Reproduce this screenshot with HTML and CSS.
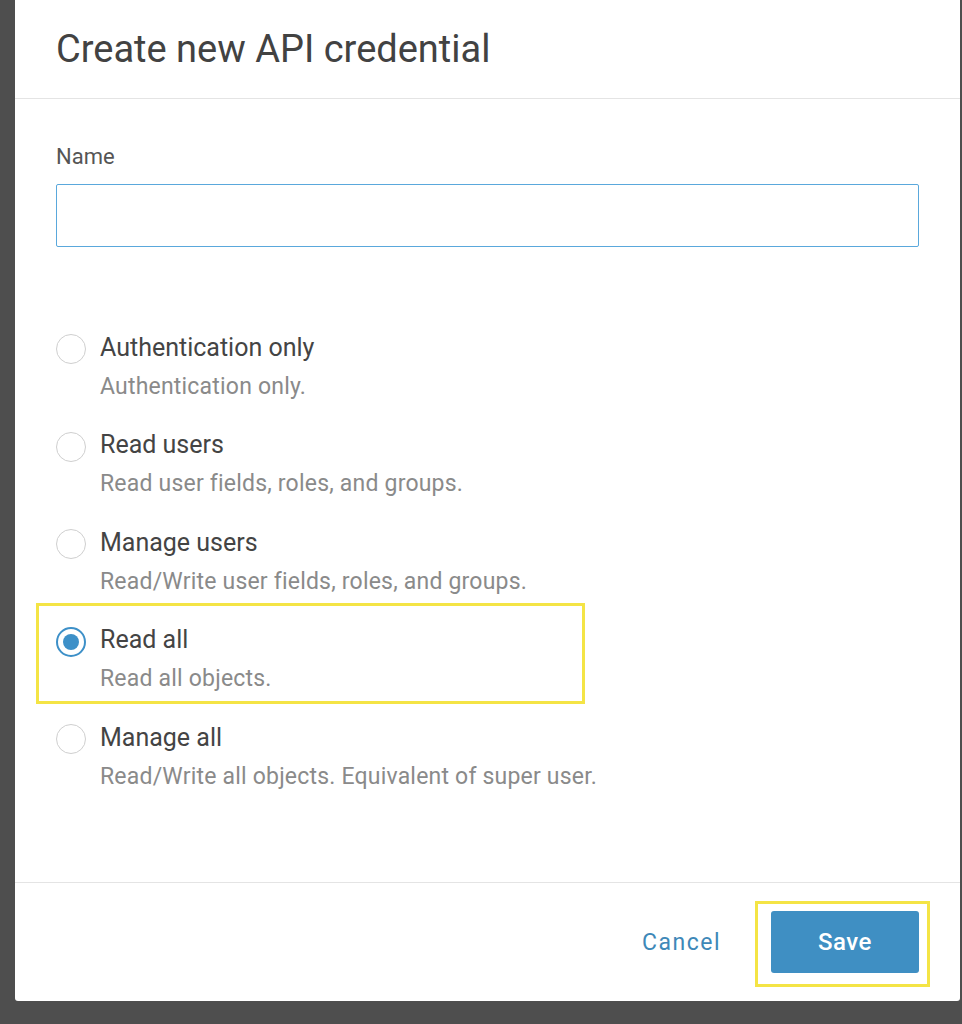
FILE: index.html
```html
<!DOCTYPE html>
<html>
<head>
<meta charset="utf-8">
<link rel="stylesheet" href="styles.css">
</head>
<body>
<div class="dialog">
  <div class="header">
    <h1 class="title">Create new API credential</h1>
  </div>
  <div class="content">
    <label class="field-label">Name</label>
    <div class="input"></div>
    <div class="options">
      <div class="option">
        <span class="radio"></span>
        <div class="option-text">
          <div class="option-title">Authentication only</div>
          <div class="option-desc">Authentication only.</div>
        </div>
      </div>
      <div class="option">
        <span class="radio"></span>
        <div class="option-text">
          <div class="option-title">Read users</div>
          <div class="option-desc">Read user fields, roles, and groups.</div>
        </div>
      </div>
      <div class="option">
        <span class="radio"></span>
        <div class="option-text">
          <div class="option-title">Manage users</div>
          <div class="option-desc">Read/Write user fields, roles, and groups.</div>
        </div>
      </div>
      <div class="option highlighted">
        <span class="radio checked"></span>
        <div class="option-text">
          <div class="option-title">Read all</div>
          <div class="option-desc">Read all objects.</div>
        </div>
        <span class="mark mark-option"></span>
      </div>
      <div class="option">
        <span class="radio"></span>
        <div class="option-text">
          <div class="option-title">Manage all</div>
          <div class="option-desc">Read/Write all objects. Equivalent of super user.</div>
        </div>
      </div>
    </div>
  </div>
  <div class="footer">
    <button class="btn-cancel">Cancel</button>
    <div class="save-wrap">
      <button class="btn-save">Save</button>
      <span class="mark mark-save"></span>
    </div>
  </div>
</div>
</body>
</html>
```

FILE: styles.css
```css
* { box-sizing: border-box; }
html, body {
  margin: 0;
  padding: 0;
  height: 1024px;
  overflow: hidden;
  background: #4e4e4e;
  font-family: Roboto, "Liberation Sans", sans-serif;
}
.dialog {
  margin-left: 15px;
  width: 945px;
  height: 1001px;
  background: #ffffff;
  border-radius: 0 0 3px 3px;
  display: flex;
  flex-direction: column;
}
.header {
  height: 99px;
  border-bottom: 1px solid #e4e4e4;
  padding: 0 41px;
  display: flex;
  align-items: flex-start;
}
.title {
  margin: 27px 0 0 0;
  font-size: 38px;
  font-weight: 400;
  color: #424242;
  line-height: 44px;
}
.content {
  flex: 1;
  padding: 0 41px;
  display: flex;
  flex-direction: column;
}
.field-label {
  margin-top: 45px;
  font-size: 22px;
  line-height: 26px;
  color: #555555;
}
.input {
  margin-top: 14px;
  height: 63px;
  border: 1.5px solid #5aa8dc;
  border-radius: 2px;
}
.options {
  margin-top: 85.5px;
  display: flex;
  flex-direction: column;
}
.option {
  position: relative;
  display: flex;
  align-items: flex-start;
  gap: 14px;
  height: 97.5px;
}
.radio {
  flex: none;
  width: 30px;
  height: 30px;
  border: 1.5px solid #cfcfcf;
  border-radius: 50%;
  margin-top: 1.5px;
  position: relative;
}
.radio.checked {
  border: 2px solid #3d90c8;
}
.radio.checked::after {
  content: "";
  position: absolute;
  left: 5px;
  top: 5px;
  width: 16px;
  height: 16px;
  border-radius: 50%;
  background: #3d90c8;
}
.option-title {
  font-size: 25px;
  line-height: 30px;
  color: #444444;
}
.option-desc {
  margin-top: 10px;
  font-size: 23px;
  line-height: 28px;
  color: #8a8a8a;
  letter-spacing: 0.2px;
}
.mark {
  position: absolute;
  border: 3px solid #f4e445;
  pointer-events: none;
}
.mark-option {
  left: -20px;
  top: -22px;
  width: 549px;
  height: 101px;
}
.footer {
  height: 119px;
  border-top: 1px solid #e4e4e4;
  display: flex;
  align-items: center;
  justify-content: flex-end;
  padding: 0 41px 0 0;
  gap: 50px;
}
.btn-cancel {
  background: none;
  border: none;
  padding: 0;
  font-family: inherit;
  font-size: 23px;
  letter-spacing: 1.5px;
  color: #3e88b8;
  cursor: pointer;
}
.save-wrap {
  position: relative;
}
.btn-save {
  display: block;
  width: 148px;
  height: 62px;
  background: #3f8fc3;
  color: #ffffff;
  border: none;
  border-radius: 3px;
  font-family: inherit;
  font-size: 24px;
  font-weight: 500;
  letter-spacing: 0.5px;
}
.mark-save {
  left: -16px;
  top: -10px;
  width: 175px;
  height: 86px;
}
```
